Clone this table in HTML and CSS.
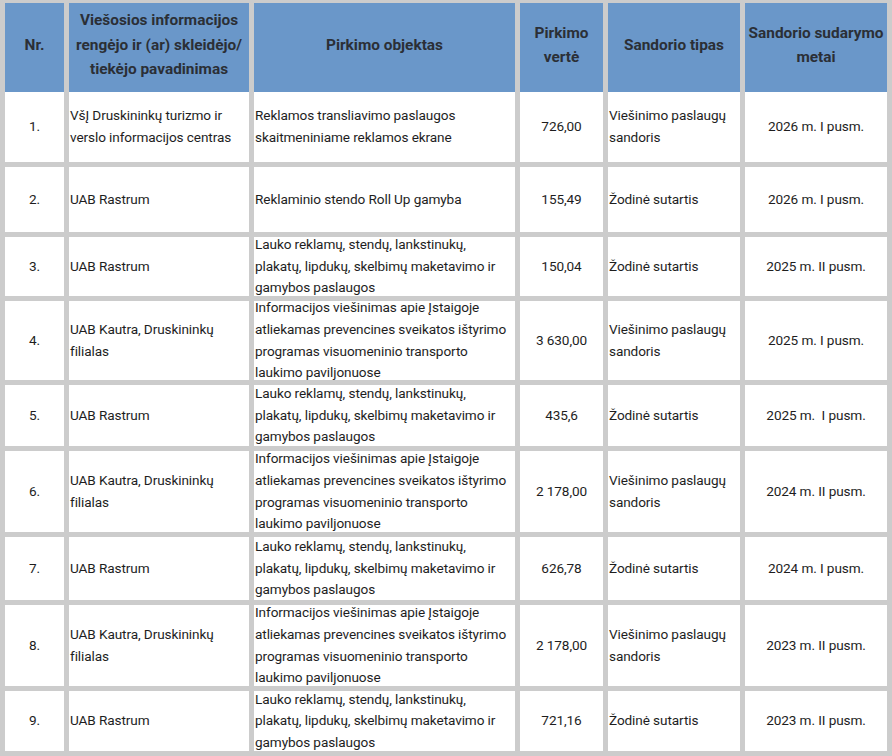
FILE: index.html
```html
<!DOCTYPE html>
<html lang="lt">
<head>
<meta charset="utf-8">
<title>Pirkimai</title>
<link rel="stylesheet" href="styles.css">
</head>
<body>
<table class="grid">
  <colgroup>
    <col class="c-nr"><col class="c-name"><col class="c-obj"><col class="c-val"><col class="c-type"><col class="c-year">
  </colgroup>
  <thead>
    <tr class="head">
      <th>Nr.</th>
      <th>Viešosios informacijos<br>rengėjo ir (ar) skleidėjo/<br>tiekėjo pavadinimas</th>
      <th>Pirkimo objektas</th>
      <th>Pirkimo<br>vertė</th>
      <th>Sandorio tipas</th>
      <th>Sandorio sudarymo<br>metai</th>
    </tr>
  </thead>
  <tbody>
    <tr class="r70">
      <td class="ctr">1.</td>
      <td><div class="ml">VšĮ Druskininkų turizmo ir<br>verslo informacijos centras</div></td>
      <td><div class="ml">Reklamos transliavimo paslaugos<br>skaitmeniniame reklamos ekrane</div></td>
      <td class="ctr">726,00</td>
      <td><div class="ml">Viešinimo paslaugų<br>sandoris</div></td>
      <td class="ctr">2026 m. I pusm.</td>
    </tr>
    <tr class="r65">
      <td class="ctr">2.</td>
      <td>UAB Rastrum</td>
      <td>Reklaminio stendo Roll Up gamyba</td>
      <td class="ctr">155,49</td>
      <td>Žodinė sutartis</td>
      <td class="ctr">2026 m. I pusm.</td>
    </tr>
    <tr class="r59">
      <td class="ctr">3.</td>
      <td>UAB Rastrum</td>
      <td><div class="ml">Lauko reklamų, stendų, lankstinukų,<br>plakatų, lipdukų, skelbimų maketavimo ir<br>gamybos paslaugos</div></td>
      <td class="ctr">150,04</td>
      <td>Žodinė sutartis</td>
      <td class="ctr">2025 m. II pusm.</td>
    </tr>
    <tr class="r79">
      <td class="ctr">4.</td>
      <td><div class="ml">UAB Kautra, Druskininkų<br>filialas</div></td>
      <td><div class="ml">Informacijos viešinimas apie Įstaigoje<br>atliekamas prevencines sveikatos ištyrimo<br>programas visuomeninio transporto<br>laukimo paviljonuose</div></td>
      <td class="ctr">3 630,00</td>
      <td><div class="ml">Viešinimo paslaugų<br>sandoris</div></td>
      <td class="ctr">2025 m. I pusm.</td>
    </tr>
    <tr class="r61">
      <td class="ctr">5.</td>
      <td>UAB Rastrum</td>
      <td><div class="ml">Lauko reklamų, stendų, lankstinukų,<br>plakatų, lipdukų, skelbimų maketavimo ir<br>gamybos paslaugos</div></td>
      <td class="ctr">435,6</td>
      <td>Žodinė sutartis</td>
      <td class="ctr">2025 m.&nbsp; I pusm.</td>
    </tr>
    <tr class="r81">
      <td class="ctr">6.</td>
      <td><div class="ml">UAB Kautra, Druskininkų<br>filialas</div></td>
      <td><div class="ml">Informacijos viešinimas apie Įstaigoje<br>atliekamas prevencines sveikatos ištyrimo<br>programas visuomeninio transporto<br>laukimo paviljonuose</div></td>
      <td class="ctr">2 178,00</td>
      <td><div class="ml">Viešinimo paslaugų<br>sandoris</div></td>
      <td class="ctr">2024 m. II pusm.</td>
    </tr>
    <tr class="r63">
      <td class="ctr">7.</td>
      <td>UAB Rastrum</td>
      <td><div class="ml">Lauko reklamų, stendų, lankstinukų,<br>plakatų, lipdukų, skelbimų maketavimo ir<br>gamybos paslaugos</div></td>
      <td class="ctr">626,78</td>
      <td>Žodinė sutartis</td>
      <td class="ctr">2024 m. I pusm.</td>
    </tr>
    <tr class="r81">
      <td class="ctr">8.</td>
      <td><div class="ml">UAB Kautra, Druskininkų<br>filialas</div></td>
      <td><div class="ml">Informacijos viešinimas apie Įstaigoje<br>atliekamas prevencines sveikatos ištyrimo<br>programas visuomeninio transporto<br>laukimo paviljonuose</div></td>
      <td class="ctr">2 178,00</td>
      <td><div class="ml">Viešinimo paslaugų<br>sandoris</div></td>
      <td class="ctr">2023 m. II pusm.</td>
    </tr>
    <tr class="r60">
      <td class="ctr">9.</td>
      <td>UAB Rastrum</td>
      <td><div class="ml">Lauko reklamų, stendų, lankstinukų,<br>plakatų, lipdukų, skelbimų maketavimo ir<br>gamybos paslaugos</div></td>
      <td class="ctr">721,16</td>
      <td>Žodinė sutartis</td>
      <td class="ctr">2023 m. II pusm.</td>
    </tr>
  </tbody>
</table>
</body>
</html>
```

FILE: styles.css
```css
html, body {
  margin: 0;
  padding: 0;
  background: #cccccc;
}

body {
  width: 892px;
  height: 756px;
  overflow: hidden;
}

.grid {
  width: 892px;
  margin-top: -2px;
  border-collapse: separate;
  border-spacing: 5px;
  table-layout: fixed;
  background: #cccccc;
  font-family: Roboto, "Liberation Sans", sans-serif;
  font-size: 13.6px;
  letter-spacing: -0.1px;
  color: #1e1e1e;
}

.c-nr { width: 59px; }
.c-name { width: 180px; }
.c-obj { width: 261px; }
.c-val { width: 83px; }
.c-type { width: 132px; }
.c-year { width: 142px; }

.head th {
  height: 84px;
  padding: 0 1px;
  background: #6a97c9;
  box-shadow: 0 5px 0 #6a97c9;
  color: #2b2f36;
  font-size: 15.4px;
  font-weight: 700;
  letter-spacing: 0;
  line-height: 24.5px;
  text-align: center;
  vertical-align: middle;
}

td {
  padding: 0 1px;
  background: #ffffff;
  line-height: 21.6px;
  text-align: left;
  vertical-align: middle;
  white-space: nowrap;
  overflow: visible;
}

td.ctr { text-align: center; }

.ml {
  margin: -7px 0;
}

.r70 td { height: 70px; }
.r65 td { height: 65px; }
.r59 td { height: 59px; }
.r79 td { height: 79px; }
.r61 td { height: 61px; }
.r81 td { height: 81px; }
.r63 td { height: 63px; }
.r60 td { height: 60px; }
```
